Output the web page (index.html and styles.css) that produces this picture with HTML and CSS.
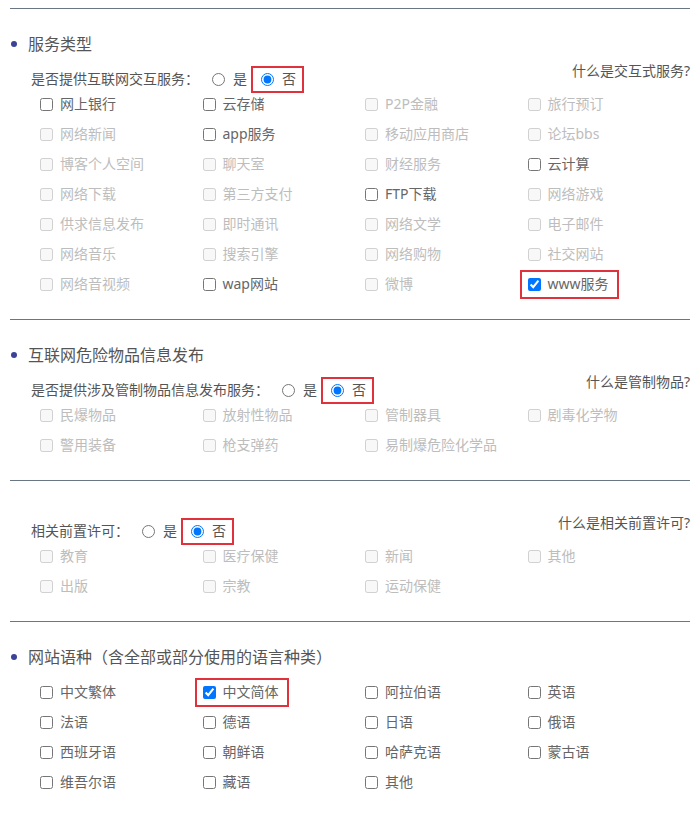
FILE: index.html
```html
<!DOCTYPE html>
<html lang="zh-CN">
<head>
    <meta charset="UTF-8">
    <meta name="viewport" content="width=device-width, initial-scale=1.0">
    <title>网站服务信息</title>
    <link rel="stylesheet" href="styles.css">
</head>
<body>

<div class="page">

    <!-- 服务类型 -->
    <div class="section">
        <div class="title">服务类型</div>
        <div class="ask">
            <div class="ask-main">
                <span class="ask-label">是否提供互联网交互服务：</span>
                <label class="opt"><input type="radio" name="interactive">是</label>
                <label class="opt mark mark-radio"><input type="radio" name="interactive" checked>否</label>
            </div>
            <span class="ask-link">什么是交互式服务?</span>
        </div>
        <div class="opts">
            <label class="opt"><input type="checkbox">网上银行</label>
            <label class="opt"><input type="checkbox">云存储</label>
            <label class="opt off"><input type="checkbox" disabled>P2P金融</label>
            <label class="opt off"><input type="checkbox" disabled>旅行预订</label>

            <label class="opt off"><input type="checkbox" disabled>网络新闻</label>
            <label class="opt"><input type="checkbox">app服务</label>
            <label class="opt off"><input type="checkbox" disabled>移动应用商店</label>
            <label class="opt off"><input type="checkbox" disabled>论坛bbs</label>

            <label class="opt off"><input type="checkbox" disabled>博客个人空间</label>
            <label class="opt off"><input type="checkbox" disabled>聊天室</label>
            <label class="opt off"><input type="checkbox" disabled>财经服务</label>
            <label class="opt"><input type="checkbox">云计算</label>

            <label class="opt off"><input type="checkbox" disabled>网络下载</label>
            <label class="opt off"><input type="checkbox" disabled>第三方支付</label>
            <label class="opt"><input type="checkbox">FTP下载</label>
            <label class="opt off"><input type="checkbox" disabled>网络游戏</label>

            <label class="opt off"><input type="checkbox" disabled>供求信息发布</label>
            <label class="opt off"><input type="checkbox" disabled>即时通讯</label>
            <label class="opt off"><input type="checkbox" disabled>网络文学</label>
            <label class="opt off"><input type="checkbox" disabled>电子邮件</label>

            <label class="opt off"><input type="checkbox" disabled>网络音乐</label>
            <label class="opt off"><input type="checkbox" disabled>搜索引擎</label>
            <label class="opt off"><input type="checkbox" disabled>网络购物</label>
            <label class="opt off"><input type="checkbox" disabled>社交网站</label>

            <label class="opt off"><input type="checkbox" disabled>网络音视频</label>
            <label class="opt"><input type="checkbox">wap网站</label>
            <label class="opt off"><input type="checkbox" disabled>微博</label>
            <label class="opt mark"><input type="checkbox" checked>www服务</label>
        </div>
    </div>

    <!-- 危险物品 -->
    <div class="section">
        <div class="title">互联网危险物品信息发布</div>
        <div class="ask">
            <div class="ask-main">
                <span class="ask-label">是否提供涉及管制物品信息发布服务：</span>
                <label class="opt"><input type="radio" name="danger">是</label>
                <label class="opt mark mark-radio"><input type="radio" name="danger" checked>否</label>
            </div>
            <span class="ask-link">什么是管制物品?</span>
        </div>
        <div class="opts">
            <label class="opt off"><input type="checkbox" disabled>民爆物品</label>
            <label class="opt off"><input type="checkbox" disabled>放射性物品</label>
            <label class="opt off"><input type="checkbox" disabled>管制器具</label>
            <label class="opt off"><input type="checkbox" disabled>剧毒化学物</label>
            <label class="opt off"><input type="checkbox" disabled>警用装备</label>
            <label class="opt off"><input type="checkbox" disabled>枪支弹药</label>
            <label class="opt off"><input type="checkbox" disabled>易制爆危险化学品</label>
        </div>
    </div>

    <!-- 前置许可 -->
    <div class="section section-plain">
        <div class="ask">
            <div class="ask-main">
                <span class="ask-label">相关前置许可：</span>
                <label class="opt"><input type="radio" name="permit">是</label>
                <label class="opt mark mark-radio"><input type="radio" name="permit" checked>否</label>
            </div>
            <span class="ask-link">什么是相关前置许可?</span>
        </div>
        <div class="opts">
            <label class="opt off"><input type="checkbox" disabled>教育</label>
            <label class="opt off"><input type="checkbox" disabled>医疗保健</label>
            <label class="opt off"><input type="checkbox" disabled>新闻</label>
            <label class="opt off"><input type="checkbox" disabled>其他</label>
            <label class="opt off"><input type="checkbox" disabled>出版</label>
            <label class="opt off"><input type="checkbox" disabled>宗教</label>
            <label class="opt off"><input type="checkbox" disabled>运动保健</label>
        </div>
    </div>

    <!-- 语种 -->
    <div class="section">
        <div class="title">网站语种（含全部或部分使用的语言种类）</div>
        <div class="opts opts-lang">
            <label class="opt"><input type="checkbox">中文繁体</label>
            <label class="opt mark"><input type="checkbox" checked>中文简体</label>
            <label class="opt"><input type="checkbox">阿拉伯语</label>
            <label class="opt"><input type="checkbox">英语</label>

            <label class="opt"><input type="checkbox">法语</label>
            <label class="opt"><input type="checkbox">德语</label>
            <label class="opt"><input type="checkbox">日语</label>
            <label class="opt"><input type="checkbox">俄语</label>

            <label class="opt"><input type="checkbox">西班牙语</label>
            <label class="opt"><input type="checkbox">朝鲜语</label>
            <label class="opt"><input type="checkbox">哈萨克语</label>
            <label class="opt"><input type="checkbox">蒙古语</label>

            <label class="opt"><input type="checkbox">维吾尔语</label>
            <label class="opt"><input type="checkbox">藏语</label>
            <label class="opt"><input type="checkbox">其他</label>
        </div>
    </div>

</div>

</body>
</html>
```

FILE: styles.css
```css
body {
    margin: 0;
    font-family: "Noto Sans", "Noto Sans CJK SC", sans-serif;
    font-size: 14px;
    line-height: 20px;
    color: #666;
    background-color: #fff;
}
.page {
    padding: 8px 10px 0;
}
.section {
    border-top: 1px solid #6b7684;
    padding: 23px 0 20px;
}
.section-plain {
    padding-top: 40px;
}
.title {
    display: flex;
    align-items: center;
    height: 24px;
    font-size: 16px;
    color: #555;
}
.title::before {
    content: '';
    width: 6px;
    height: 6px;
    border-radius: 50%;
    background-color: #3a4396;
    margin: 0 11px 0 1px;
}
.ask {
    display: flex;
    justify-content: space-between;
    align-items: flex-start;
    height: 20px;
    margin-top: 13px;
    padding-left: 21px;
}
.section-plain .ask {
    margin-top: 0;
}
.ask-main {
    display: flex;
    align-items: center;
    height: 20px;
    color: #555;
}
.ask-label {
    margin-right: 13px;
}
.ask-main .opt + .opt {
    margin-left: 14px;
}
.ask-link {
    margin-top: -8px;
    color: #555;
}
.opts {
    display: grid;
    grid-template-columns: repeat(4, 1fr);
    grid-auto-rows: 30px;
    align-items: center;
    padding-left: 30px;
}
.opts-lang {
    margin-top: 8px;
}
.opt {
    display: inline-flex;
    align-items: center;
    gap: 7px;
    height: 20px;
    justify-self: start;
    white-space: nowrap;
}
.ask-main .opt {
    gap: 8px;
}
.opt input {
    margin: 0;
    width: 13px;
    height: 13px;
}
.opt.off {
    color: #bdbdbd;
}
.mark {
    position: relative;
}
.mark::after {
    content: '';
    position: absolute;
    top: -4px;
    bottom: -5px;
    left: -8px;
    right: -10px;
    border: 2px solid #e0323c;
}
.mark-radio::after {
    top: -3px;
    bottom: -4px;
    left: -10px;
    right: -8px;
}
```
